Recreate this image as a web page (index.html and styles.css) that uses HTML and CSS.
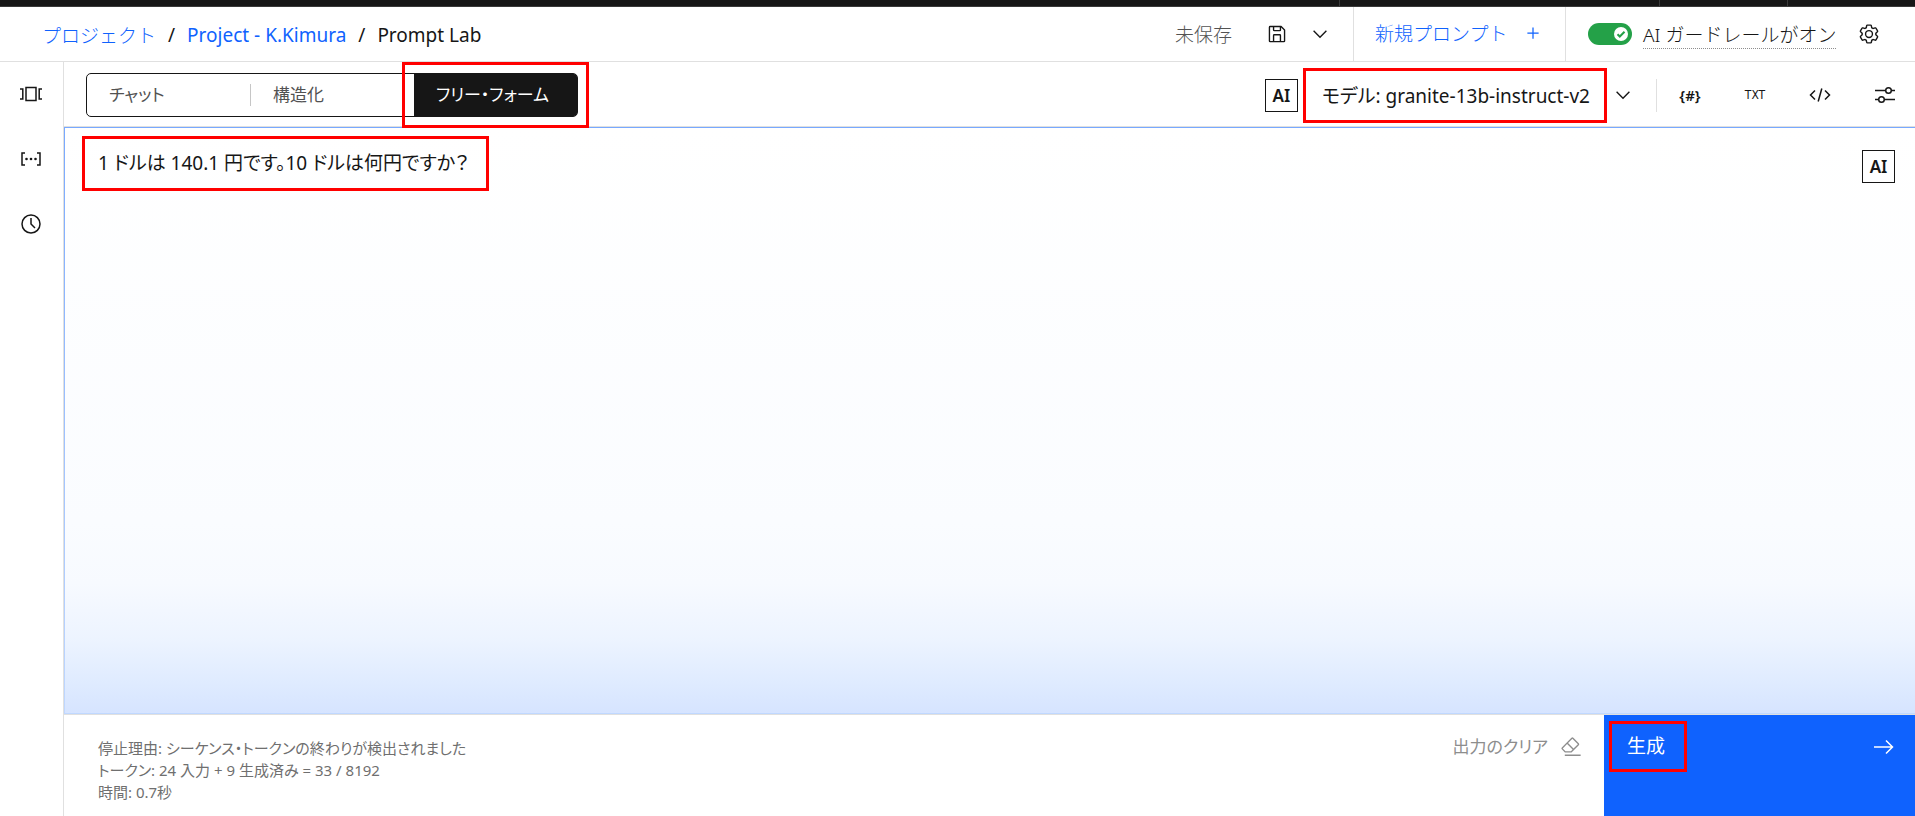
FILE: index.html
```html
<!DOCTYPE html>
<html lang="ja">
<head>
    <meta charset="UTF-8">
    <meta name="viewport" content="width=device-width, initial-scale=1.0">
    <title>Prompt Lab</title>
    <link rel="stylesheet" href="styles.css">
</head>
<body>
    <div class="topbar">
        <span class="topbar-cell"></span>
        <span class="topbar-cell cell-small"></span>
        <span class="topbar-cell cell-small"></span>
    </div>

    <header class="header">
        <nav class="breadcrumb">
            <a class="light" href="#">プロジェクト</a>
            <span class="slash">/</span>
            <a href="#">Project - K.Kimura</a>
            <span class="slash">/</span>
            <span>Prompt Lab</span>
        </nav>
        <div class="save">
            <span class="status">未保存</span>
            <button class="icon-button" aria-label="保存">
                <svg width="22" height="22" viewBox="0 0 32 32"><path d="M27.7 9.3l-5-5A1 1 0 0 0 22 4H6a2 2 0 0 0-2 2v20a2 2 0 0 0 2 2h20a2 2 0 0 0 2-2V10a1 1 0 0 0-.3-.7zM12 6h8v4h-8zm8 20h-8v-8h8zm2 0v-8a2 2 0 0 0-2-2h-8a2 2 0 0 0-2 2v8H6V6h4v4a2 2 0 0 0 2 2h8a2 2 0 0 0 2-2V6.400l4 4V26z"/></svg>
            </button>
            <button class="icon-button" aria-label="保存メニュー">
                <svg width="22" height="22" viewBox="0 0 16 16"><path d="M8 11L3 6l.7-.7L8 9.600l4.300-4.300.7.7z"/></svg>
            </button>
        </div>
        <button class="new-prompt">新規プロンプト
            <svg width="20" height="20" viewBox="0 0 32 32"><path d="M17 15V7h-2v8H7v2h8v8h2v-8h8v-2z"/></svg>
        </button>
        <div class="guardrails">
            <label class="toggle">
                <input type="checkbox" checked>
                <span class="track">
                    <span class="knob"><svg width="10" height="10" viewBox="0 0 10 10"><path d="M1.500 5.200l2.300 2.300 4.700-4.700" fill="none" stroke="#24a148" stroke-width="2"/></svg></span>
                </span>
                <span class="toggle-text">AI ガードレールがオン</span>
            </label>
            <button class="icon-button" aria-label="設定">
                <svg width="22" height="22" viewBox="0 0 32 32"><path d="M27 16.760V15.240l1.920-1.680a2 2 0 0 0 .36-2.560l-2.360-4a2 2 0 0 0-1.730-1 2 2 0 0 0-.64.100l-2.430.820a11 11 0 0 0-1.310-.750l-.51-2.520a2 2 0 0 0-2-1.610h-4.680a2 2 0 0 0-2 1.610l-.51 2.520a11.500 11.500 0 0 0-1.320.750L7.430 6.060A2 2 0 0 0 6.790 6a2 2 0 0 0-1.730 1l-2.360 4a2 2 0 0 0 .41 2.510L5 15.240v1.520l-1.890 1.680A2 2 0 0 0 2.700 21l2.360 4a2 2 0 0 0 1.730 1 2 2 0 0 0 .64-.100l2.430-.820a11 11 0 0 0 1.310.750l.51 2.520a2 2 0 0 0 2 1.610h4.720a2 2 0 0 0 2-1.610l.51-2.520a11.500 11.500 0 0 0 1.320-.750l2.420.820a2 2 0 0 0 .64.100 2 2 0 0 0 1.730-1l2.280-4a2 2 0 0 0-.41-2.510zM25.210 24l-3.430-1.160a8.900 8.900 0 0 1-2.710 1.570L18.360 28h-4.720l-.71-3.550a9.400 9.400 0 0 1-2.700-1.570L6.790 24l-2.360-4 2.720-2.400a8.900 8.900 0 0 1 0-3.130L4.430 12l2.360-4 3.430 1.160a8.900 8.900 0 0 1 2.710-1.570L13.640 4h4.720l.71 3.550a9.400 9.400 0 0 1 2.700 1.570L25.210 8l2.360 4-2.720 2.400a8.900 8.900 0 0 1 0 3.130L27.570 20zM16 22a6 6 0 1 1 6-6 6 6 0 0 1-6 6zm0-10a4 4 0 1 0 4 4 4 4 0 0 0-4-4z"/></svg>
            </button>
        </div>
    </header>

    <div class="workspace">
        <aside class="sidebar">
            <button class="icon-button" aria-label="サンプル">
                <svg width="22" height="22" viewBox="0 0 22 22" fill="none" stroke="#161616"><rect x="6" y="4.500" width="10" height="13" stroke-width="1.500"/><path d="M0 6h2.800v10H0M22 6h-2.800v10H22" stroke-width="1.500"/></svg>
            </button>
            <button class="icon-button" aria-label="プロンプト変数">
                <svg width="22" height="22" viewBox="0 0 22 22"><path d="M5 5H2v12h3M17 5h3v12h-3" fill="none" stroke="#161616" stroke-width="1.500"/><circle cx="6.500" cy="11" r="1.300"/><circle cx="11" cy="11" r="1.300"/><circle cx="15.500" cy="11" r="1.300"/></svg>
            </button>
            <button class="icon-button" aria-label="履歴">
                <svg width="22" height="22" viewBox="0 0 22 22" fill="none" stroke="#161616" stroke-width="1.500"><circle cx="11" cy="11" r="9"/><path d="M11 5v6l4 4"/></svg>
            </button>
        </aside>

        <main class="main">
            <div class="toolbar">
                <div class="modes">
                    <button>チャット</button>
                    <button>構造化</button>
                    <button class="active">フリー・フォーム</button>
                </div>
                <div class="tools">
                    <span class="ai-label">AI</span>
                    <button class="model marked">モデル: granite-13b-instruct-v2</button>
                    <button class="icon-button model-arrow" aria-label="モデルの選択">
                        <svg width="22" height="22" viewBox="0 0 16 16"><path d="M8 11L3 6l.7-.7L8 9.600l4.300-4.300.7.7z"/></svg>
                    </button>
                    <div class="tool-icons">
                        <button class="icon-button glyph" aria-label="変数">{#}</button>
                        <button class="icon-button glyph glyph-small" aria-label="テキスト">TXT</button>
                        <button class="icon-button" aria-label="コード">
                            <svg width="22" height="22" viewBox="0 0 22 22" fill="none" stroke="#161616" stroke-width="1.500"><path d="M6 6.500L1.500 11 6 15.500M16 6.500l4.500 4.500-4.500 4.500M12.800 4.500L9.200 17.500"/></svg>
                        </button>
                        <button class="icon-button" aria-label="パラメーター">
                            <svg width="22" height="22" viewBox="0 0 22 22" fill="none" stroke="#161616" stroke-width="1.500"><path d="M1 6.500h10.500M17.500 6.500H21M1 15.500h3.500M10.500 15.500H21"/><circle cx="14.500" cy="6.500" r="2.800"/><circle cx="7.500" cy="15.500" r="2.800"/></svg>
                        </button>
                    </div>
                </div>
            </div>

            <div class="editor">
                <div class="prompt marked" contenteditable="true" role="textbox" aria-label="プロンプト" spellcheck="false">1 ドルは 140.1 円です。10 ドルは何円ですか？</div>
                <span class="ai-label">AI</span>
            </div>

            <footer class="footer">
                <div class="result">
                    <div>停止理由: シーケンス・トークンの終わりが検出されました</div>
                    <div>トークン: 24 入力 + 9 生成済み = 33 / 8192</div>
                    <div>時間: 0.7秒</div>
                </div>
                <button class="clear">出力のクリア
                    <svg width="22" height="22" viewBox="0 0 32 32"><path d="M7 27h23v2H7zM27.380 10.510L19.450 2.590a2 2 0 0 0-2.830 0l-14 14a2 2 0 0 0 0 2.830L7.130 24h9.590l10.660-10.660a2 2 0 0 0 0-2.830zM15.890 22H8l-4-4 6.310-6.310 7.930 7.920zm3.760-3.760l-7.920-7.930L18 4l8 7.930z"/></svg>
                </button>
                <button class="generate">
                    <span class="marked">生成</span>
                    <svg width="24" height="24" viewBox="0 0 24 24" fill="none" stroke="#fff" stroke-width="1.500"><path d="M2 12h18.500M14 5.500l6.500 6.500-6.500 6.500"/></svg>
                </button>
            </footer>
        </main>
    </div>
</body>
</html>
```

FILE: styles.css
```css
* {
    box-sizing: border-box;
}

body {
    margin: 0;
    min-height: 100vh;
    display: flex;
    flex-direction: column;
    font-family: "Noto Sans", "Noto Sans CJK JP", sans-serif;
    font-size: 19px;
    color: #161616;
    background: #fff;
}

button {
    padding: 0;
    border: none;
    background: none;
    font: inherit;
    color: inherit;
    text-align: left;
    white-space: nowrap;
    cursor: pointer;
}

svg {
    display: block;
    flex: none;
    fill: currentColor;
}

svg[fill="none"] {
    fill: none;
}

a {
    color: #0f62fe;
    text-decoration: none;
}

.icon-button {
    display: flex;
    align-items: center;
    justify-content: center;
}

/* red frames around the parts to look at */
.marked {
    border: 3px solid #f00;
}

/* top */
.topbar {
    height: 7px;
    display: flex;
    justify-content: flex-end;
    background: #161616;
    border-bottom: 1px solid #393939;
}

.topbar-cell {
    width: 320px;
    border-left: 1px solid #393939;
}

.cell-small {
    width: 128px;
}

.header {
    height: 55px;
    display: flex;
    border-bottom: 1px solid #e0e0e0;
}

.breadcrumb {
    flex: 1;
    display: flex;
    align-items: center;
    gap: 12px;
    padding: 2px 0 0 42px;
}

.light {
    font-weight: 300;
}

.save {
    display: flex;
    align-items: center;
    padding-right: 22px;
}

.status {
    margin-right: 34px;
    font-weight: 300;
    color: #525252;
}

.save .icon-button + .icon-button {
    margin-left: 21px;
}

.new-prompt {
    width: 212px;
    display: flex;
    align-items: center;
    justify-content: space-between;
    padding: 0 22px 3px 21px;
    border-left: 1px solid #e0e0e0;
    font-weight: 300;
    color: #0f62fe;
}

.guardrails {
    width: 350px;
    display: flex;
    align-items: center;
    justify-content: space-between;
    padding: 0 35px 0 22px;
    border-left: 1px solid #e0e0e0;
}

.toggle {
    display: flex;
    align-items: center;
    gap: 11px;
    cursor: pointer;
}

.toggle input {
    position: absolute;
    opacity: 0;
}

.track {
    width: 44px;
    height: 22px;
    display: flex;
    align-items: center;
    justify-content: flex-end;
    padding: 4px;
    border-radius: 11px;
    background: #24a148;
}

.knob {
    width: 14px;
    height: 14px;
    display: flex;
    align-items: center;
    justify-content: center;
    border-radius: 50%;
    background: #fff;
}

.toggle-text {
    border-bottom: 1px dotted #8d8d8d;
    font-weight: 300;
}

/* work area */
.workspace {
    flex: 1;
    display: flex;
}

.sidebar {
    width: 64px;
    display: flex;
    flex-direction: column;
    align-items: center;
    gap: 43px;
    padding: 21px 2px 0 0;
    border-right: 1px solid #e0e0e0;
}

.main {
    flex: 1;
    display: flex;
    flex-direction: column;
    font-feature-settings: "palt";
}

.toolbar {
    height: 65px;
    display: flex;
    align-items: center;
    justify-content: space-between;
    padding: 2px 0 0 22px;
    border-bottom: 1px solid #e0e0e0;
}

.modes {
    width: 492px;
    height: 44px;
    display: flex;
    align-items: center;
    border: 1px solid #161616;
    border-radius: 5px;
    font-size: 17px;
    color: #525252;
}

.modes button {
    flex: 1 1 0;
    height: 22px;
    padding: 0 22px;
    line-height: 22px;
}

.modes button + button {
    border-left: 1px solid #c6c6c6;
}

.modes .active {
    position: relative;
    height: 42px;
    border: none;
    border-radius: 0 3px 3px 0;
    color: #fff;
    background: #161616;
}

.modes .active::after {
    content: "";
    position: absolute;
    inset: -12px;
    border: 3px solid #f00;
}

.tools {
    display: flex;
    align-items: center;
}

.ai-label {
    width: 33px;
    height: 33px;
    flex: none;
    display: flex;
    align-items: center;
    justify-content: center;
    border: 1px solid #161616;
    font-size: 17px;
    font-weight: 600;
}

.model {
    height: 55px;
    margin-left: 5px;
    padding: 0 14px 0 16px;
}

.model-arrow {
    margin: 0 22px 0 5px;
}

.tool-icons {
    height: 33px;
    display: flex;
    align-items: center;
    padding-right: 19px;
    border-left: 1px solid #e0e0e0;
    padding-left: 22px;
    gap: 43px;
}

.tool-icons .icon-button {
    width: 22px;
}

.glyph {
    font-size: 15px;
    font-weight: 600;
}

.glyph-small {
    font-family: "DejaVu Sans Condensed", Roboto, sans-serif;
    font-size: 12px;
    font-weight: 400;
}

.editor {
    flex: 1;
    display: flex;
    justify-content: space-between;
    align-items: flex-start;
    padding: 8px 20px 0 17px;
    border: 1px solid transparent;
    border-right: none;
    background:
        linear-gradient(to top, #d6e4ff, #dfebff 30px, #edf4ff 75px, #f7faff 130px, #fafcff 190px, #fff) padding-box,
        linear-gradient(to top, #c0d8ff, #78a9ff) border-box;
}

.editor .ai-label {
    margin-top: 14px;
}

.prompt {
    min-width: 407px;
    height: 55px;
    padding: 0 13px;
    line-height: 48px;
    outline: none;
}

.footer {
    height: 102px;
    display: flex;
    border-top: 1px solid #e0e0e0;
}

.result {
    flex: 1;
    padding: 22px 0 0 34px;
    font-size: 15px;
    line-height: 22px;
    color: #6f6f6f;
}

.clear {
    display: flex;
    align-items: center;
    align-self: flex-start;
    gap: 12px;
    margin-right: 22px;
    font-size: 17px;
    line-height: 64px;
    color: #8d8d8d;
}

.generate {
    width: 311px;
    display: flex;
    justify-content: space-between;
    align-items: flex-start;
    padding: 6px 19px 0 5px;
    color: #fff;
    background: #0f62fe;
}

.generate span {
    height: 51px;
    padding: 0 19px 0 15px;
    line-height: 45px;
}

.generate svg {
    margin-top: 14px;
}
```
